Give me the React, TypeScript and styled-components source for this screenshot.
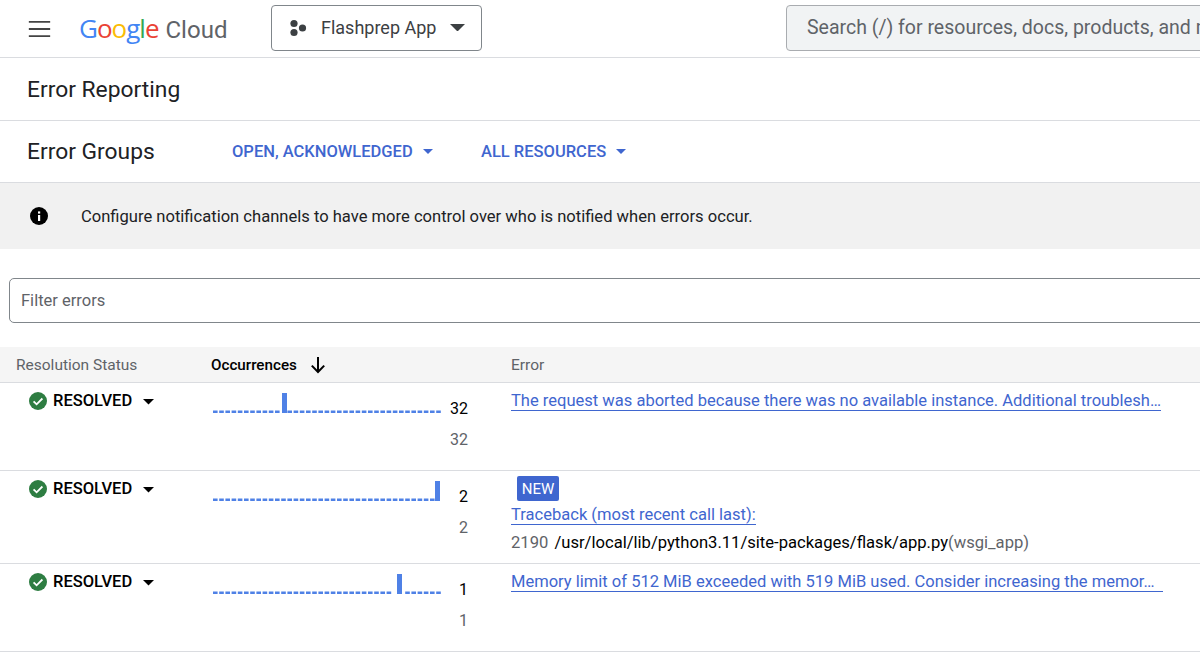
import React from 'react';
import styled, { createGlobalStyle } from 'styled-components';

const GlobalStyle = createGlobalStyle`
  html, body {
    margin: 0;
    padding: 0;
    background: #fff;
    overflow: hidden;
  }
  body {
    font-family: Roboto, "Liberation Sans", sans-serif;
    color: #202124;
  }
`;

interface ErrorGroup {
  count: number;
  spikeAt: number;
  rowHeight: number;
  title: string;
  isNew?: boolean;
  stack?: boolean;
}

const ERROR_GROUPS: ErrorGroup[] = [
  {
    count: 32,
    spikeAt: 69,
    rowHeight: 88,
    title:
      'The request was aborted because there was no available instance. Additional troublesh…'
  },
  {
    count: 2,
    spikeAt: 222,
    rowHeight: 93,
    title: 'Traceback (most recent call last):',
    isNew: true,
    stack: true
  },
  {
    count: 1,
    spikeAt: 184,
    rowHeight: 88,
    title:
      'Memory limit of 512 MiB exceeded with 519 MiB used. Consider increasing the memor…\u00a0\u00a0'
  }
];

const Sparkline = ({ spikeAt }: { spikeAt: number }) => {
  const dashes = [];
  for (let x = 0; x < 224; x += 6.2) {
    if (x + 4.6 > spikeAt && x < spikeAt + 5) continue;
    dashes.push(<rect key={x} x={x} y={19.5} width={4.6} height={2.5} fill="#4f81e6" />);
  }
  return (
    <svg width="228" height="24" viewBox="0 0 228 24">
      {dashes}
      <rect x={spikeAt} y={2} width={5} height={20} fill="#4f81e6" />
    </svg>
  );
};

const CaretIcon = ({ size = 12 }: { size?: number }) => (
  <svg width={size} height={size * 0.5} viewBox="0 0 12 6">
    <path d="M0 0h12L6 6z" fill="currentColor" />
  </svg>
);

const ResolvedIcon = () => (
  <svg width="18" height="18" viewBox="0 0 18 18">
    <circle cx="9" cy="9" r="9" fill="#2e7d42" />
    <path d="M4.6 9.3l3 3 5.8-5.8" fill="none" stroke="#fff" strokeWidth="1.8" />
  </svg>
);

export default function App() {
  return (
    <>
      <GlobalStyle />
      <Page>
        <TopBar>
          <MenuIcon viewBox="0 0 24 18">
            <path d="M0 1h24M0 9h24M0 17h24" stroke="#444" strokeWidth="2.2" />
          </MenuIcon>
          <Logo>
            <GoogleWord>
              <Letter $color="#4285f4">G</Letter>
              <Letter $color="#ea4335">o</Letter>
              <Letter $color="#fbbc05">o</Letter>
              <Letter $color="#4285f4">g</Letter>
              <Letter $color="#34a853">l</Letter>
              <Letter $color="#ea4335">e</Letter>
            </GoogleWord>
            <CloudWord>Cloud</CloudWord>
          </Logo>
          <ProjectButton>
            <svg width="18" height="18" viewBox="0 0 18 18">
              <circle cx="5" cy="4.5" r="3.6" fill="#3c4043" />
              <circle cx="5" cy="13.5" r="3.6" fill="#3c4043" />
              <circle cx="13.5" cy="9" r="3.6" fill="#3c4043" />
            </svg>
            <ProjectName>Flashprep App</ProjectName>
            <CaretIcon size={15} />
          </ProjectButton>
          <SearchBox>Search (/) for resources, docs, products, and more</SearchBox>
        </TopBar>

        <TitleBar>Error Reporting</TitleBar>

        <GroupsBar>
          <GroupsTitle>Error Groups</GroupsTitle>
          <FilterLink $width={249}>
            OPEN, ACKNOWLEDGED
            <CaretIcon size={10} />
          </FilterLink>
          <FilterLink $width={160}>
            ALL RESOURCES
            <CaretIcon size={10} />
          </FilterLink>
        </GroupsBar>

        <Banner>
          <svg width="18" height="18" viewBox="0 0 18 18">
            <circle cx="9" cy="9" r="9" fill="#000" />
            <rect x="8" y="8" width="2.2" height="6" fill="#fff" />
            <rect x="8" y="4.4" width="2.2" height="2.2" fill="#fff" />
          </svg>
          Configure notification channels to have more control over who is notified when errors occur.
        </Banner>

        <FilterInput>Filter errors</FilterInput>

        <TableHead>
          <HeadCell $width={195}>Resolution Status</HeadCell>
          <HeadCell $width={300} $active>
            Occurrences
            <svg width="16" height="18" viewBox="0 0 16 18">
              <path d="M8 1v15M1.8 9.6L8 16l6.2-6.4" fill="none" stroke="#000" strokeWidth="2" />
            </svg>
          </HeadCell>
          <HeadCell>Error</HeadCell>
        </TableHead>

        {ERROR_GROUPS.map((group: ErrorGroup) => (
          <Row key={group.title} $height={group.rowHeight}>
            <StatusCell>
              <ResolvedIcon />
              <StatusLabel>RESOLVED</StatusLabel>
              <CaretIcon size={11} />
            </StatusCell>
            <OccurrenceCell>
              <Sparkline spikeAt={group.spikeAt} />
              <Counts>
                <span>{group.count}</span>
                <MutedCount>{group.count}</MutedCount>
              </Counts>
            </OccurrenceCell>
            <ErrorCell>
              {group.isNew && <NewBadge>NEW</NewBadge>}
              <ErrorTitle>{group.title}</ErrorTitle>
              {group.stack && (
                <StackLine>
                  2190 <StackPath>/usr/local/lib/python3.11/site-packages/flask/app.py</StackPath>
                  (wsgi_app)
                </StackLine>
              )}
            </ErrorCell>
          </Row>
        ))}
      </Page>
    </>
  );
}

const Page = styled.div`
  width: 1200px;
  height: 652px;
  overflow: hidden;
`;

const TopBar = styled.header`
  height: 57px;
  display: flex;
  align-items: center;
  padding-left: 28px;
  border-bottom: 1px solid #dadce0;
`;

const MenuIcon = styled.svg`
  width: 23px;
  height: 16px;
  flex: none;
`;

const Logo = styled.div`
  margin-left: 28px;
  width: 192px;
  display: flex;
  align-items: baseline;
  font-family: "Open Sans", sans-serif;
  font-size: 26px;
  flex: none;
  margin-bottom: 2px;
`;

const GoogleWord = styled.span`
  letter-spacing: -1px;
`;

const Letter = styled.span<{ $color: string }>`
  color: ${(p) => p.$color};
`;

const CloudWord = styled.span`
  margin-left: 7px;
  color: #5f6368;
  font-family: Roboto, sans-serif;
  font-size: 24px;
`;

const ProjectButton = styled.div`
  width: 211px;
  height: 46px;
  margin-bottom: 2px;
  box-sizing: border-box;
  display: flex;
  align-items: center;
  padding: 0 16px 0 17px;
  border: 1px solid #80868b;
  border-radius: 4px;
  color: #3c4043;
  flex: none;
`;

const ProjectName = styled.span`
  flex: 1;
  margin-left: 14px;
  font-size: 18px;
`;

const SearchBox = styled.div`
  margin: 0 0 2px 304px;
  width: 600px;
  height: 46px;
  box-sizing: border-box;
  flex: none;
  display: flex;
  align-items: center;
  padding-left: 20px;
  background: #f1f3f4;
  border: 1px solid #a9acb0;
  border-radius: 4px;
  font-size: 19.5px;
  color: #5f6368;
  white-space: nowrap;
`;

const TitleBar = styled.div`
  height: 62px;
  display: flex;
  align-items: center;
  padding-left: 27px;
  font-size: 22.8px;
  color: #202124;
  border-bottom: 1px solid #dadce0;
`;

const GroupsBar = styled.div`
  height: 61px;
  display: flex;
  align-items: center;
  padding-left: 27px;
  border-bottom: 1px solid #dadce0;
`;

const GroupsTitle = styled.h2`
  width: 205px;
  margin: 0;
  font-size: 22.8px;
  font-weight: 400;
  color: #202124;
`;

const FilterLink = styled.div<{ $width: number }>`
  width: ${(p) => p.$width}px;
  display: flex;
  align-items: center;
  gap: 10px;
  font-size: 16.5px;
  font-weight: 500;
  color: #3f66cf;
  padding-bottom: 1px;
`;

const Banner = styled.div`
  height: 66px;
  display: flex;
  align-items: center;
  gap: 33px;
  padding-left: 30px;
  background: #f1f1f1;
  font-size: 16.57px;
  color: #202124;
`;

const FilterInput = styled.div`
  margin: 29px 0 24px 9px;
  width: 1300px;
  height: 45px;
  box-sizing: border-box;
  display: flex;
  align-items: center;
  padding-left: 11px;
  border: 1px solid #80868b;
  border-radius: 5px;
  font-size: 16.5px;
  color: #5f6368;
`;

const TableHead = styled.div`
  height: 36px;
  box-sizing: border-box;
  display: flex;
  align-items: center;
  padding-left: 16px;
  background: #f5f5f5;
  border-bottom: 1px solid #dadce0;
`;

const HeadCell = styled.div<{ $width?: number; $active?: boolean }>`
  width: ${(p) => (p.$width ? `${p.$width}px` : 'auto')};
  display: flex;
  align-items: center;
  gap: 13px;
  font-size: ${(p) => (p.$active ? 15.2 : 15.5)}px;
  font-weight: ${(p) => (p.$active ? 500 : 400)};
  color: ${(p) => (p.$active ? '#000' : '#5f6368')};
`;

const Row = styled.div<{ $height: number }>`
  height: ${(p) => p.$height}px;
  box-sizing: border-box;
  display: flex;
  border-bottom: 1px solid #dadce0;
`;

const StatusCell = styled.div`
  width: 213px;
  box-sizing: border-box;
  padding: 9px 0 0 29px;
  display: flex;
  align-items: flex-start;
  gap: 6px;
  font-size: 16px;
  color: #000;

  svg:last-child {
    margin: 7px 0 0 5px;
  }
`;

const StatusLabel = styled.span`
  font-weight: 500;
  font-size: 16.5px;
  line-height: 18px;
`;

const OccurrenceCell = styled.div`
  width: 298px;
  display: flex;
  align-items: flex-start;
  padding-top: 8px;
`;

const Counts = styled.div`
  width: 40px;
  margin-left: -13px;
  padding-top: 8px;
  display: flex;
  flex-direction: column;
  align-items: flex-end;
  gap: 12px;
  font-size: 16px;
  line-height: 19px;
  color: #000;
`;

const MutedCount = styled.span`
  color: #5f6368;
`;

const ErrorCell = styled.div`
  flex: 1;
  display: flex;
  flex-direction: column;
  align-items: flex-start;
  padding-top: 8px;
  font-size: 16.55px;
`;

const NewBadge = styled.span`
  margin: -3px 0 4px 6px;
  width: 42px;
  height: 25px;
  display: flex;
  align-items: center;
  justify-content: center;
  background: #3f66cf;
  border-radius: 2px;
  color: #fff;
  font-size: 15px;
`;

const ErrorTitle = styled.span`
  color: #3f66cf;
  line-height: 19px;
  border-bottom: 1.5px solid #3f66cf;
  white-space: pre;
`;

const StackLine = styled.div`
  margin-top: 8px;
  color: #5f6368;
  font-size: 16.6px;
  white-space: nowrap;
`;

const StackPath = styled.span`
  color: #000;
  margin-left: 2px;
`;
